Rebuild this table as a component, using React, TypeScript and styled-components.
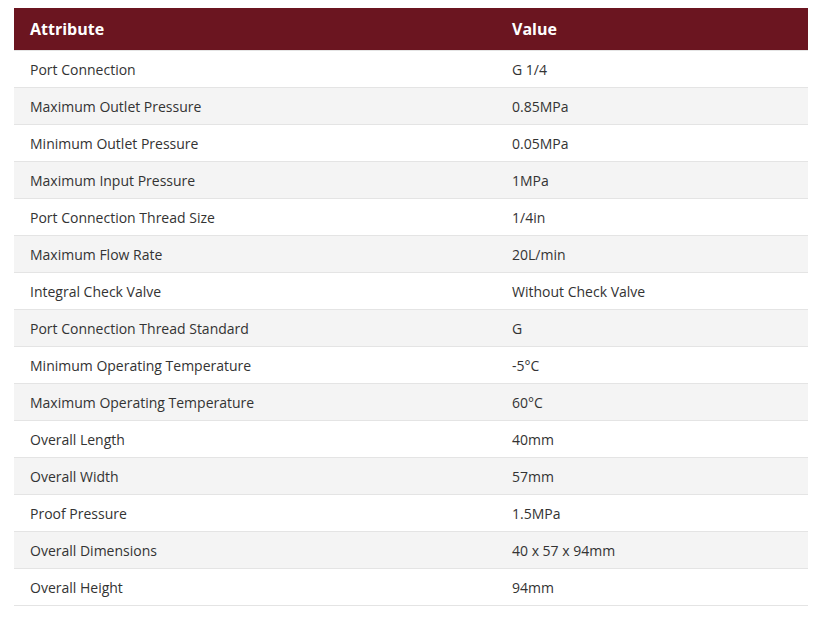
import React from "react";
import styled, { createGlobalStyle } from "styled-components";

const Global = createGlobalStyle`
  html, body { margin: 0; padding: 0; background: #ffffff; }
  body { font-family: "Open Sans", "Noto Sans", sans-serif; }
`;

const Wrapper = styled.div`
  padding: 8px 14px;
`;

const Table = styled.table`
  width: 100%;
  border-collapse: collapse;
  font-family: "Open Sans", "Noto Sans", sans-serif;
`;

const HeadCell = styled.th`
  background: #6b1520;
  color: #ffffff;
  font-weight: 700;
  font-size: 16px;
  line-height: 22px;
  text-align: left;
  padding: 10px 16px;
  border-bottom: 1px solid #e4e4e4;
  box-sizing: border-box;
  &:first-child { width: 482px; }
`;

const Row = styled.tr<{ $alt: boolean }>`
  background: ${(p) => (p.$alt ? "#f4f4f4" : "#ffffff")};
  border-bottom: 1px solid #e4e4e4;
`;

const Cell = styled.td`
  font-size: 14px;
  color: #333333;
  line-height: 20px;
  padding: 9px 16px 7px;
`;

const rows: [string, string][] = [
  ["Port Connection", "G 1/4"],
  ["Maximum Outlet Pressure", "0.85MPa"],
  ["Minimum Outlet Pressure", "0.05MPa"],
  ["Maximum Input Pressure", "1MPa"],
  ["Port Connection Thread Size", "1/4in"],
  ["Maximum Flow Rate", "20L/min"],
  ["Integral Check Valve", "Without Check Valve"],
  ["Port Connection Thread Standard", "G"],
  ["Minimum Operating Temperature", "-5°C"],
  ["Maximum Operating Temperature", "60°C"],
  ["Overall Length", "40mm"],
  ["Overall Width", "57mm"],
  ["Proof Pressure", "1.5MPa"],
  ["Overall Dimensions", "40 x 57 x 94mm"],
  ["Overall Height", "94mm"],
];

export default function App() {
  return (
    <>
      <Global />
      <Wrapper>
        <Table>
          <thead>
            <tr>
              <HeadCell>Attribute</HeadCell>
              <HeadCell>Value</HeadCell>
            </tr>
          </thead>
          <tbody>
            {rows.map(([a, v], i) => (
              <Row key={a} $alt={i % 2 === 1}>
                <Cell>{a}</Cell>
                <Cell>{v}</Cell>
              </Row>
            ))}
          </tbody>
        </Table>
      </Wrapper>
    </>
  );
}
